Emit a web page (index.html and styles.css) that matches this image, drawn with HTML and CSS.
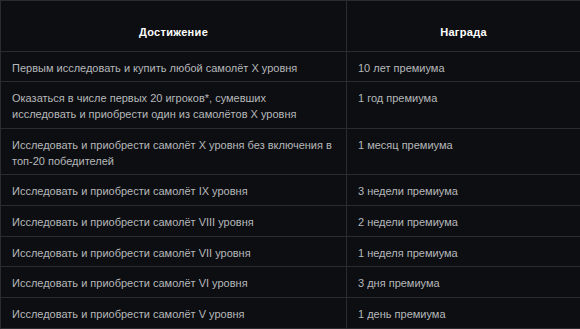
FILE: index.html
```html
<!DOCTYPE html>
<html lang="ru">
<head>
<meta charset="utf-8">
<link rel="stylesheet" href="styles.css">
</head>
<body>
<table class="rewards">
  <colgroup><col class="col-a"><col class="col-b"></colgroup>
  <thead>
    <tr><th>Достижение</th><th>Награда</th></tr>
  </thead>
  <tbody>
    <tr><td>Первым исследовать и купить любой самолёт X уровня</td><td>10 лет премиума</td></tr>
    <tr><td>Оказаться в числе первых 20 игроков*, сумевших исследовать и приобрести один из самолётов X уровня</td><td>1 год премиума</td></tr>
    <tr><td>Исследовать и приобрести самолёт X уровня без включения в топ-20 победителей</td><td>1 месяц премиума</td></tr>
    <tr><td>Исследовать и приобрести самолёт IX уровня</td><td>3 недели премиума</td></tr>
    <tr><td>Исследовать и приобрести самолёт VIII уровня</td><td>2 недели премиума</td></tr>
    <tr><td>Исследовать и приобрести самолёт VII уровня</td><td>1 неделя премиума</td></tr>
    <tr><td>Исследовать и приобрести самолёт VI уровня</td><td>3 дня премиума</td></tr>
    <tr><td>Исследовать и приобрести самолёт V уровня</td><td>1 день премиума</td></tr>
  </tbody>
</table>
</body>
</html>
```

FILE: styles.css
```css
html, body {
  margin: 0;
  padding: 0;
  background: #0d0e11;
}
.rewards {
  width: 580px;
  border-collapse: collapse;
  table-layout: fixed;
  font-family: "Liberation Sans", Arial, sans-serif;
  font-size: 11px;
  line-height: 15.7px;
  color: #b6b8bb;
  background: #0d0e11;
}
.col-a { width: 346px; }
.col-b { width: 234px; }
.rewards th,
.rewards td {
  border: 1px solid #2b2c30;
  text-align: left;
  vertical-align: top;
}
.rewards th {
  color: #ffffff;
  font-weight: bold;
  letter-spacing: 0.3px;
  text-align: center;
  padding: 24px 11px 10px;
}
.rewards td {
  padding: 9px 14px 5px 11px;
}
```
